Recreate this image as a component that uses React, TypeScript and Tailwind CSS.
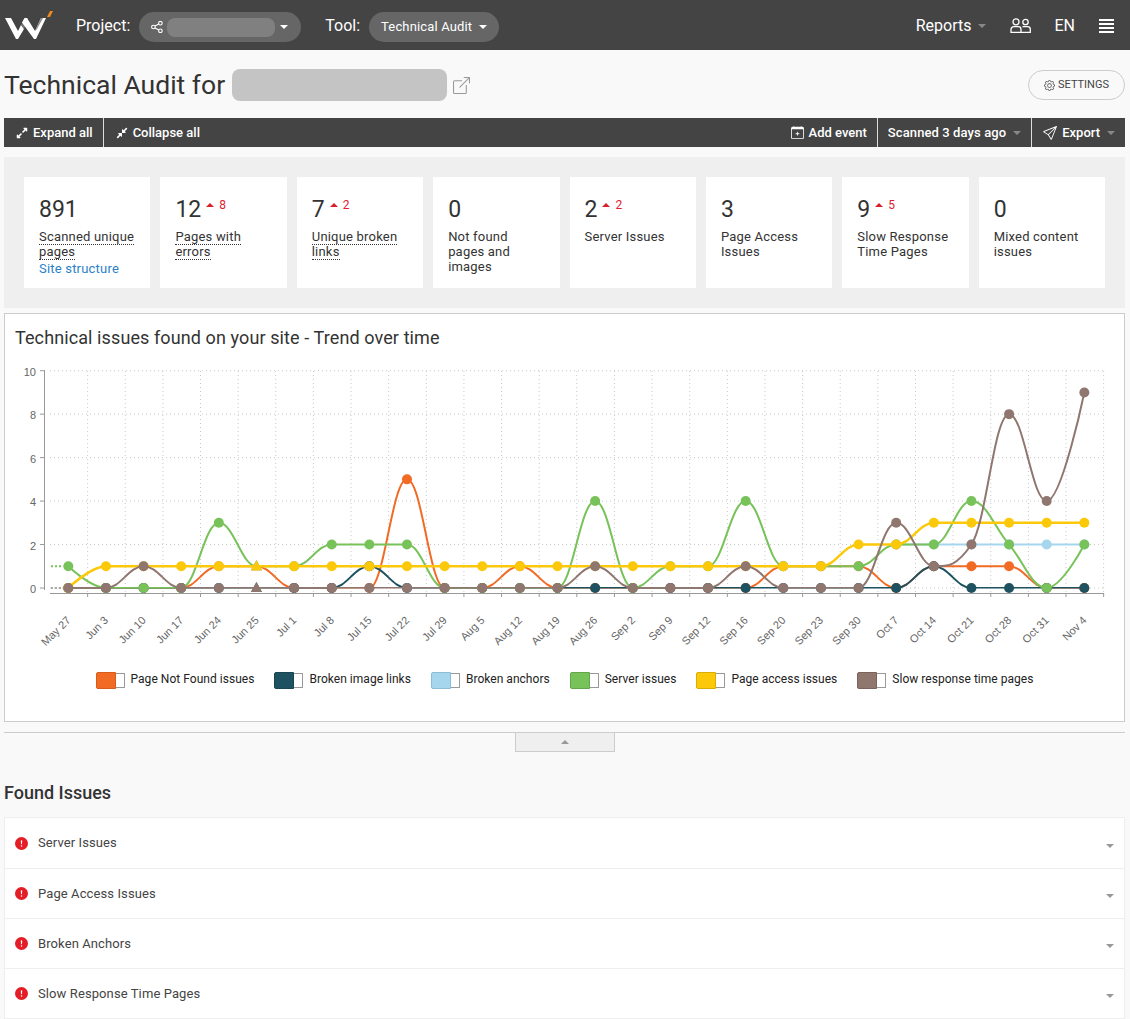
import {
  BsBoxArrowUpRight,
  BsCalendarPlus,
  BsSend,
  BsGear,
  BsExclamationCircleFill,
} from "react-icons/bs";
import { FaExpandAlt, FaCompressAlt } from "react-icons/fa";

const labels = [
  "May 27", "Jun 3", "Jun 10", "Jun 17", "Jun 24", "Jun 25", "Jul 1", "Jul 8", "Jul 15", "Jul 22",
  "Jul 29", "Aug 5", "Aug 12", "Aug 19", "Aug 26", "Sep 2", "Sep 9", "Sep 12", "Sep 16", "Sep 20",
  "Sep 23", "Sep 30", "Oct 7", "Oct 14", "Oct 21", "Oct 28", "Oct 31", "Nov 4",
];

const series = [
  { name: "Page Not Found issues", color: "#f26b25", swatch: "bg-[#f26b25] border-[#d85c1c]", data: [0,0,0,0,1,1,0,0,0,5,0,0,1,0,0,0,0,0,0,1,1,1,0,1,1,1,0,0] },
  { name: "Broken image links", color: "#1f5261", swatch: "bg-[#1f5261] border-[#1a4552]", data: [0,0,0,0,0,0,0,0,1,0,0,0,0,0,0,0,0,0,0,0,0,0,0,1,0,0,0,0] },
  { name: "Broken anchors", color: "#a5d6ee", swatch: "bg-[#a5d6ee] border-[#8dbdd6]", data: [null,null,null,null,null,null,null,null,null,null,null,null,null,null,null,null,null,null,null,null,null,null,2,2,2,2,2,2] },
  { name: "Server issues", color: "#78c25a", swatch: "bg-[#78c25a] border-[#65a54b]", data: [1,0,0,0,3,1,1,2,2,2,0,0,0,0,4,0,1,1,4,1,1,1,2,2,4,2,0,2] },
  { name: "Page access issues", color: "#fbc90a", swatch: "bg-[#fbc90a] border-[#d8ad08]", data: [0,1,1,1,1,1,1,1,1,1,1,1,1,1,1,1,1,1,1,1,1,2,2,3,3,3,3,3] },
  { name: "Slow response time pages", color: "#8f766e", swatch: "bg-[#8f766e] border-[#7a635c]", data: [0,0,1,0,0,0,0,0,0,0,0,0,0,0,1,0,0,0,1,0,0,0,3,1,2,8,4,9] },
];

const stats = [
  { value: "891", label: "Scanned unique pages", dotted: true, link: "Site structure" },
  { value: "12", delta: "8", label: "Pages with errors", dotted: true },
  { value: "7", delta: "2", label: "Unique broken links", dotted: true },
  { value: "0", label: "Not found pages and images" },
  { value: "2", delta: "2", label: "Server Issues" },
  { value: "3", label: "Page Access Issues" },
  { value: "9", delta: "5", label: "Slow Response Time Pages" },
  { value: "0", label: "Mixed content issues" },
];

const issues = ["Server Issues", "Page Access Issues", "Broken Anchors", "Slow Response Time Pages"];

const colW = 37.63;
const xAt = (i: number) => 49.5 + colW * (i + 0.5);
const yAt = (v: number) => 588 - v * 21.73;

// same control points as a highcharts spline, flat at local extremes
function splinePath(values: (number | null)[]) {
  const pts = values
    .map((v, i) => (v === null ? null : [xAt(i), yAt(v)]))
    .filter(Boolean) as number[][];
  const conts = pts.map((p, i) => {
    const prev = pts[i - 1];
    const next = pts[i + 1];
    if (!prev || !next) return { lx: p[0], ly: p[1], rx: p[0], ry: p[1] };
    const lx = (1.5 * p[0] + prev[0]) / 2.5;
    let ly = (1.5 * p[1] + prev[1]) / 2.5;
    const rx = (1.5 * p[0] + next[0]) / 2.5;
    let ry = (1.5 * p[1] + next[1]) / 2.5;
    const corr = ((ry - ly) * (rx - p[0])) / (rx - lx) + p[1] - ry;
    ly += corr;
    ry += corr;
    if (ly > prev[1] && ly > p[1]) {
      ly = Math.max(prev[1], p[1]);
      ry = 2 * p[1] - ly;
    } else if (ly < prev[1] && ly < p[1]) {
      ly = Math.min(prev[1], p[1]);
      ry = 2 * p[1] - ly;
    }
    if (ry > next[1] && ry > p[1]) {
      ry = Math.max(next[1], p[1]);
      ly = 2 * p[1] - ry;
    } else if (ry < next[1] && ry < p[1]) {
      ry = Math.min(next[1], p[1]);
      ly = 2 * p[1] - ry;
    }
    return { lx, ly, rx, ry };
  });
  let d = `M${pts[0][0]} ${pts[0][1]}`;
  for (let i = 1; i < pts.length; i++) {
    const a = conts[i - 1];
    const b = conts[i];
    d += ` C${a.rx} ${a.ry} ${b.lx} ${b.ly} ${pts[i][0]} ${pts[i][1]}`;
  }
  return d;
}

function Caret({ className }: { className: string }) {
  return <span className={`inline-block w-0 h-0 border-x-4 border-t-4 border-x-transparent ${className}`} />;
}

function CaretUp({ className }: { className: string }) {
  return <span className={`inline-block w-0 h-0 border-x-4 border-b-4 border-x-transparent ${className}`} />;
}

function Logo() {
  // viewBox is in page pixels
  return (
    <svg width="55" height="30" viewBox="0 9 55 30" className="block">
      <polygon points="5,17 11,17 18,30 21,24 24,28 18,38 16,38" fill="#fff" />
      <polygon points="21,24 25,17 28,17 24,28" fill="#777" />
      <polygon points="22,21.5 24.5,17 27,17 35,30 41,17 46,17 36,38 34,38" fill="#fff" />
      <polygon points="35,30 41,17 43,17 37,28" fill="#8a8a8a" />
      <polygon points="47,16 50,10 53,10 50,16" fill="#f08a1d" />
    </svg>
  );
}

function ShareIcon() {
  return (
    <svg width="12" height="12" viewBox="0 0 12 12" fill="none" stroke="#fff" strokeWidth="1.1" className="block">
      <circle cx="2.4" cy="6" r="1.8" />
      <circle cx="9.4" cy="2.2" r="1.8" />
      <circle cx="9.4" cy="9.8" r="1.8" />
      <path d="M4 5.1l3.8-2M4 6.9l3.8 2" />
    </svg>
  );
}

function UsersIcon() {
  return (
    <svg width="21" height="15" viewBox="0 0 21 15" fill="none" stroke="#fff" strokeWidth="1.3" className="block">
      <circle cx="6" cy="3.8" r="3" />
      <circle cx="15.5" cy="4" r="2.7" />
      <path d="M1 14.3v-2.8a2.8 2.8 0 0 1 2.8-2.8h4.4a2.8 2.8 0 0 1 2.8 2.8v2.8z" />
      <path d="M12.5 8.7h5.2a2.6 2.6 0 0 1 2.6 2.6v3H11" />
    </svg>
  );
}

function Chart() {
  const gridY = [0, 2, 4, 6, 8, 10];
  return (
    <svg width="1119" height="300" viewBox="5 360 1119 300" className="block">
      <defs>
        <clipPath id="plot">
          <rect x="50" y="360" width="1054" height="228.5" />
        </clipPath>
      </defs>
      {gridY.map((v) => (
        <g key={v}>
          <line x1="50" x2="1104" y1={yAt(v)} y2={yAt(v)} stroke="#c8c8c8" strokeDasharray="1 3" />
          <line x1="40" x2="44" y1={yAt(v)} y2={yAt(v)} stroke="#999" />
          <text x="36" y={yAt(v) + 5} textAnchor="end" fontSize="11" fill="#666" fontFamily="'Liberation Sans', Arial, sans-serif">
            {v}
          </text>
        </g>
      ))}
      {labels.map((_, i) => (
        <g key={i}>
          <line x1={50 + colW * (i + 1)} x2={50 + colW * (i + 1)} y1="371" y2="593" stroke="#c8c8c8" strokeDasharray="1 3" />
          <line x1={50 + colW * (i + 1)} x2={50 + colW * (i + 1)} y1="593" y2="597" stroke="#999" />
        </g>
      ))}
      <line x1="44.5" x2="44.5" y1="370" y2="590" stroke="#999" />
      <line x1="50" x2="1104" y1="593.5" y2="593.5" stroke="#999" />
      {labels.map((l, i) => (
        <text
          key={l}
          x={xAt(i) + 3}
          y="621"
          textAnchor="end"
          fontSize="11"
          fill="#666"
          fontFamily="'Liberation Sans', Arial, sans-serif"
          transform={`rotate(-45 ${xAt(i) + 3} 621)`}
        >
          {l}
        </text>
      ))}
      <line x1="51" x2="62" y1={yAt(1)} y2={yAt(1)} stroke="#78c25a" strokeWidth="2" strokeDasharray="2 2" />
      <line x1="51" x2="62" y1={yAt(0)} y2={yAt(0)} stroke="#555" strokeDasharray="2 2" />
      {series.map((s) => (
        <g key={s.name}>
          <path d={splinePath(s.data)} fill="none" stroke={s.color} strokeWidth={s.name === "Page access issues" ? 2.5 : 2} clipPath="url(#plot)" />
          {s.data.map((v, i) => {
            if (v === null) return null;
            if (i === 5) {
              const x = xAt(i);
              const y = yAt(v);
              return <polygon key={i} points={`${x},${y - 6} ${x + 5.5},${y + 4} ${x - 5.5},${y + 4}`} fill={s.color} />;
            }
            return <circle key={i} cx={xAt(i)} cy={yAt(v)} r="5" fill={s.color} />;
          })}
        </g>
      ))}
    </svg>
  );
}

export default function App() {
  return (
    <div className="min-h-[1019px] bg-[#f9f9f9] font-['Roboto',sans-serif] text-[#333] overflow-hidden">
      <header className="h-[50px] bg-[#444] flex items-center text-white">
        <Logo />
        <span className="ml-[21px] text-[16px] mt-[1px]">Project:</span>
        <div className="ml-[9px] mt-[4px] w-[162px] h-[30px] rounded-full bg-[#666] flex items-center pl-[12px]">
          <ShareIcon />
          <div className="ml-[4px] w-[108px] h-[19px] rounded-lg bg-[#808080]" />
          <Caret className="ml-[5px] border-t-white" />
        </div>
        <span className="ml-[24px] text-[16px] mt-[1px]">Tool:</span>
        <div className="ml-[9px] mt-[4px] w-[130px] h-[30px] rounded-full bg-[#666] flex items-center pl-[12px] text-[13px] tracking-[0.15px]">
          Technical Audit
          <Caret className="ml-[7px] border-t-white" />
        </div>
        <div className="ml-auto flex items-center text-[16px] mt-[1px]">
          <span>Reports</span>
          <Caret className="ml-[7px] border-t-[#888]" />
          <div className="ml-[24px]">
            <UsersIcon />
          </div>
          <span className="ml-[23px]">EN</span>
          <div className="ml-[24px] mr-[16px] w-[15px] flex flex-col gap-[2px]">
            <div className="h-[2px] bg-white" />
            <div className="h-[2px] bg-white" />
            <div className="h-[2px] bg-white" />
            <div className="h-[2px] bg-white" />
          </div>
        </div>
      </header>

      <div className="h-[68px] pl-[4px] pr-[5px] pt-[2px] flex items-center">
        <h1 className="text-[26.5px] font-normal leading-none mt-[1px]">Technical Audit for</h1>
        <div className="ml-[7px] w-[215px] h-[32px] rounded-lg bg-[#c4c4c4]" />
        <BsBoxArrowUpRight size={17} className="ml-[6px] text-[#999]" />
        <button className="ml-auto h-[30px] w-[97px] rounded-full border border-[#ccc] flex items-center justify-center gap-[3px] text-[11px] text-[#444]">
          <BsGear size={11} />
          SETTINGS
        </button>
      </div>

      <div className="ml-[4px] mr-[5px] h-[29px] bg-[#444] flex items-center text-white text-[13px] font-medium">
        <div className="h-full flex items-center gap-[5px] pl-[12px] pr-[10px] border-r border-[#ddd]">
          <FaExpandAlt size={12} />
          Expand all
        </div>
        <div className="h-full flex items-center gap-[5px] pl-[12px] pr-[10px]">
          <FaCompressAlt size={12} />
          Collapse all
        </div>
        <div className="ml-auto h-full flex items-center gap-[5px] pr-[10px] border-r border-[#ddd]">
          <BsCalendarPlus size={13} />
          Add event
        </div>
        <div className="h-full flex items-center pl-[10px] pr-[10px] border-r border-[#ddd] tracking-[0.1px]">
          Scanned 3 days ago
          <Caret className="ml-[7px] border-t-[#888]" />
        </div>
        <div className="h-full flex items-center gap-[5px] pl-[11px] pr-[10px]">
          <BsSend size={14} />
          Export
          <Caret className="ml-[2px] border-t-[#888]" />
        </div>
      </div>

      <div className="ml-[4px] mr-[5px] mt-[10px] h-[151px] bg-[#efefef] p-[20px] grid grid-cols-8 gap-[10px]">
        {stats.map((s, i) => (
          <div key={i} className="bg-white h-[111px] pl-[15px] pr-[15px] pt-[19px]">
            <div className="flex items-start h-[30px]">
              <span className="text-[23px] leading-[28px] text-[#333]">{s.value}</span>
              {s.delta && (
                <span className="ml-[5px] flex items-center gap-[5px] text-[12px] leading-[18px] text-[#e02030]">
                  <CaretUp className="border-b-[#d8202a]" />
                  {s.delta}
                </span>
              )}
            </div>
            <div className="mt-[3px] text-[13px] leading-[15px] text-[#333] tracking-[0.2px]">
              <span className={s.dotted ? "border-b border-dotted border-[#333]" : ""}>{s.label}</span>
            </div>
            {s.link && <div className="mt-[2px] text-[13px] leading-[15px] text-[#2b7fc9] tracking-[0.2px]">{s.link}</div>}
          </div>
        ))}
      </div>

      <div className="ml-[4px] mr-[5px] mt-[5px] h-[409px] bg-white border border-[#ccc]">
        <h2 className="pl-[10px] pt-[13px] h-[46px] text-[18px] leading-[22px] font-normal tracking-[0.1px]">
          Technical issues found on your site - Trend over time
        </h2>
        <Chart />
        <div className="mt-[12px] flex justify-center gap-[20px]">
          {series.map((s) => (
            <div key={s.name} className="flex items-center h-[17px] text-[12px] text-[#222]">
              <div className={`w-[20px] h-[17px] rounded-l-[2px] border ${s.swatch}`} />
              <div className="w-[9px] h-[15px] bg-white border border-l-0 border-[#999]" />
              <span className="ml-[6px] mt-[-3px] tracking-[0.03px]">{s.name}</span>
            </div>
          ))}
        </div>
      </div>

      <div className="ml-[4px] mr-[5px] mt-[10px] h-px bg-[#ccc]" />
      <div className="flex justify-center pr-[1px]">
        <div className="w-[100px] h-[19px] bg-[#efefef] border border-t-0 border-[#ccc] flex items-center justify-center">
          <CaretUp className="border-b-[#999]" />
        </div>
      </div>

      <h3 className="ml-[4px] mt-[30px] text-[18px] leading-[22px] font-medium text-[#333]">Found Issues</h3>
      <div className="ml-[4px] mr-[5px] mt-[13px] bg-white border border-[#eee]">
        {issues.map((name, i) => (
          <div key={name} className={`h-[50px] flex items-center pl-[10px] pr-[10px] ${i > 0 ? "border-t border-[#eee]" : ""}`}>
            <BsExclamationCircleFill size={13} className="text-[#e41e26]" />
            <span className="ml-[10px] text-[13px] text-[#444] tracking-[0.1px]">{name}</span>
            <Caret className="ml-auto mt-[5px] border-t-[#999]" />
          </div>
        ))}
      </div>
    </div>
  );
}
